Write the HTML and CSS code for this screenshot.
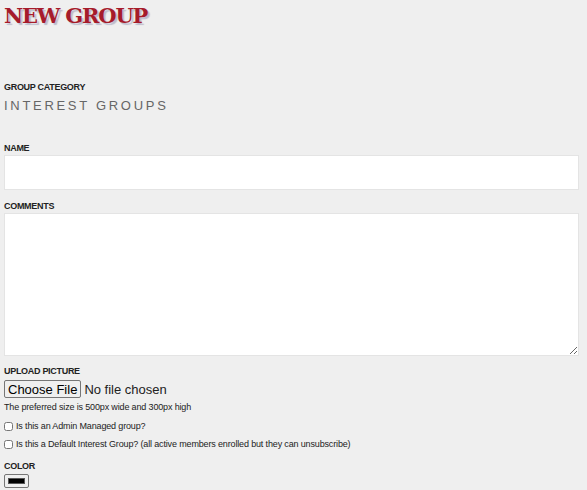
FILE: index.html
```html
<!DOCTYPE html>
<html lang="en">
<head>
    <meta charset="utf-8">
    <title>New Group</title>
    <link rel="stylesheet" href="styles.css">
</head>
<body>
    <div class="page">
        <h1 class="title">NEW GROUP</h1>

        <div class="field category">
            <label class="label">GROUP CATEGORY</label>
            <p class="category-name">INTEREST GROUPS</p>
        </div>

        <div class="field name">
            <label class="label" for="name">NAME</label>
            <input type="text" id="name" class="text-input">
        </div>

        <div class="field comments">
            <label class="label" for="comments">COMMENTS</label>
            <textarea id="comments" class="text-area"></textarea>
        </div>

        <div class="field upload">
            <label class="label" for="picture">UPLOAD PICTURE</label>
            <input type="file" id="picture" class="file-input">
            <p class="hint">The preferred size is 500px wide and 300px high</p>
        </div>

        <div class="check-row first">
            <input type="checkbox" id="admin" class="check">
            <label for="admin">Is this an Admin Managed group?</label>
        </div>
        <div class="check-row">
            <input type="checkbox" id="default" class="check">
            <label for="default">Is this a Default Interest Group? (all active members enrolled but they can unsubscribe)</label>
        </div>

        <div class="field color">
            <label class="label" for="color">COLOR</label>
            <input type="color" id="color" class="color-input" value="#000000">
        </div>
    </div>
</body>
</html>
```

FILE: styles.css
```css
body {
    margin: 0;
    background-color: #efefef;
    font-family: "Liberation Sans", Arial, sans-serif;
    color: #222;
}
.page {
    padding: 4px 8px 0 4px;
}
.title {
    margin: 0;
    font-family: "DejaVu Serif", serif;
    font-weight: bold;
    font-size: 21px;
    line-height: 24px;
    color: #a61b2b;
    text-shadow: 2px 2px 1px #bcbccc;
    letter-spacing: -1.2px;
}
.field {
    display: flex;
    flex-direction: column;
    align-items: flex-start;
}
.label {
    font-size: 9px;
    font-weight: bold;
    letter-spacing: -0.3px;
    line-height: 12px;
    color: #222;
}
.category {
    margin-top: 53px;
}
.category-name {
    margin: 5px 0 0;
    font-size: 13px;
    letter-spacing: 2.7px;
    line-height: 16px;
    color: #666;
}
.name {
    margin-top: 28px;
}
.comments {
    margin-top: 10px;
}
.text-input,
.text-area {
    box-sizing: border-box;
    align-self: stretch;
    margin-top: 1px;
    border: 1px solid #e4e4e4;
    background: #fff;
}
.text-input {
    height: 35px;
}
.text-area {
    height: 143px;
}
.upload {
    margin-top: 9px;
}
.file-input {
    height: 18px;
    margin-top: 3px;
    font-family: "Liberation Sans", Arial, sans-serif;
    font-size: 13px;
}
.file-input::file-selector-button {
    height: 18px;
    padding: 0 3px;
    margin-right: 3px;
    font-family: "Liberation Sans", Arial, sans-serif;
    font-size: 13px;
    border: 1px solid #767676;
    border-radius: 2px;
    background: #efefef;
    color: #000;
}
.hint {
    margin: 3px 0 0;
    font-size: 9px;
    line-height: 12px;
    letter-spacing: -0.15px;
}
.check-row {
    display: flex;
    align-items: center;
    margin-top: 6px;
    font-size: 9px;
    line-height: 12px;
    letter-spacing: -0.15px;
}
.check-row.first {
    margin-top: 7px;
}
.check {
    width: 9px;
    height: 9px;
    margin: 0 3px 0 0;
}
.color {
    margin-top: 10px;
}
.color-input {
    box-sizing: border-box;
    width: 25px;
    height: 14px;
    padding: 3px 3px;
    margin-top: 2px;
    border: 1px solid #767676;
    border-radius: 2px;
    background: #efefef;
}
.color-input::-webkit-color-swatch-wrapper {
    padding: 0;
}
.color-input::-webkit-color-swatch {
    border: 1px solid #555;
    border-radius: 0;
}
```
